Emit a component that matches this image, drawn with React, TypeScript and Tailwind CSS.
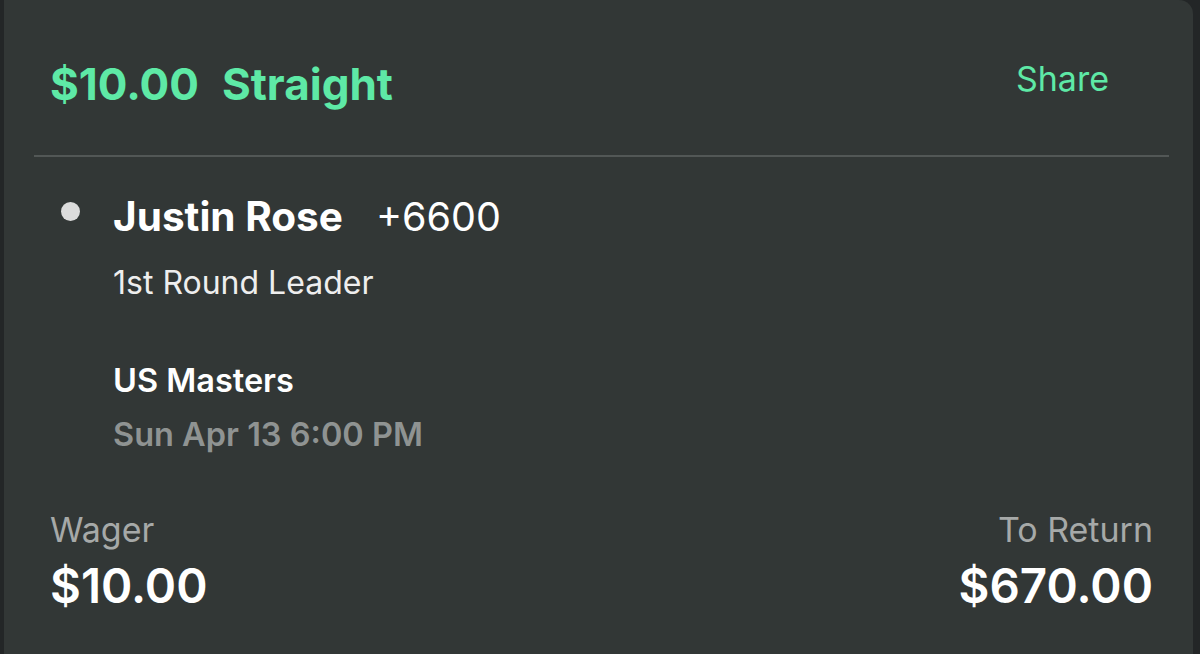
import React from "react";

const font = { fontFamily: "Inter, 'Noto Sans', sans-serif" };

export default function App() {
  return (
    <div className="w-[1200px] h-[654px] bg-[#232627] pl-[4px] pr-[7px] overflow-hidden" style={font}>
      <div className="h-full bg-[#323736] rounded-tr-[14px] flex flex-col">
        {/* Header */}
        <div className="flex items-start justify-between pl-[46px] pr-[84px] h-[155px] pt-[62px]">
          <div className="flex items-baseline gap-[23px] text-[#5ee9a6] text-[44px] font-bold leading-none">
            <span>$10.00</span>
            <span>Straight</span>
          </div>
          <span className="text-[#5ee9a6] text-[34px] leading-none">Share</span>
        </div>
        <div className="ml-[30px] mr-[24px] h-[2px] bg-[#525756]" />

        {/* Selection */}
        <div className="flex pl-[57px] pt-[40px]">
          <div className="w-[20px] pt-[5px]">
            <div className="w-[19px] h-[19px] rounded-full bg-[#dcdcdc]" />
          </div>
          <div className="flex flex-col pl-[32px]">
            <div className="flex items-baseline gap-[33px] text-white text-[40.5px] leading-none">
              <span className="font-bold">Justin Rose</span>
              <span className="text-[39.5px]">+6600</span>
            </div>
            <span className="text-[#eeeeee] text-[32px] leading-none mt-[29px]">1st Round Leader</span>
            <span className="text-white text-[32.5px] font-semibold leading-none mt-[66px]">US Masters</span>
            <span className="text-[#8f9392] text-[32.5px] font-semibold leading-none mt-[22px]">Sun Apr 13 6:00 PM</span>
          </div>
        </div>

        {/* Totals */}
        <div className="flex justify-between pl-[46px] pr-[40px] mt-auto pb-[45px]">
          <div className="flex flex-col">
            <span className="text-[#a6a9a8] text-[34px] leading-none">Wager</span>
            <span className="text-white text-[47.5px] font-semibold leading-none mt-[15px]">$10.00</span>
          </div>
          <div className="flex flex-col items-end">
            <span className="text-[#a6a9a8] text-[34px] leading-none">To Return</span>
            <span className="text-white text-[47.5px] font-semibold leading-none mt-[15px]">$670.00</span>
          </div>
        </div>
      </div>
    </div>
  );
}
